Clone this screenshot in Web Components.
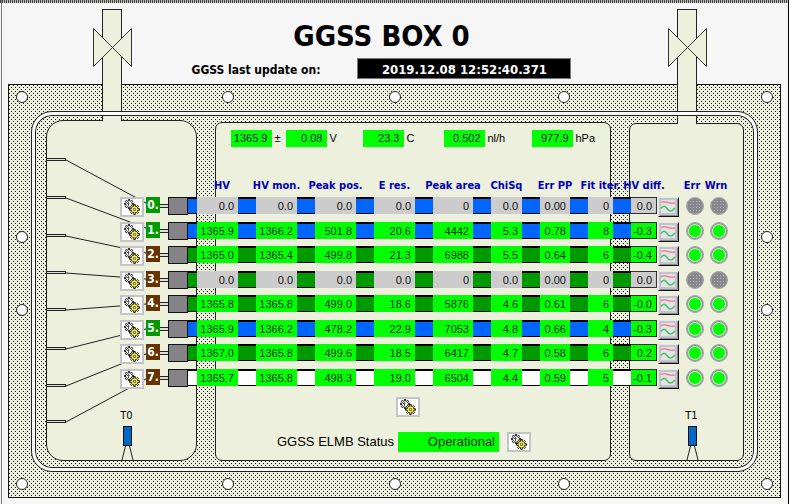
<!DOCTYPE html>
<html lang="en">
<head>
<meta charset="utf-8">
<title>GGSS BOX 0</title>
<style>
html, body { margin: 0; background: #f6f6f6; }
body { color: #000; font: 11px/17px "Liberation Sans", Arial, sans-serif; }
</style>
</head>
<body>
<ggss-panel></ggss-panel>
<script>
const define = (name, html, setup) => {
  const tpl = document.createElement('template');
  tpl.innerHTML = html;
  customElements.define(name, class extends HTMLElement {
    constructor() {
      super();
      this.attachShadow({ mode: 'open' }).append(tpl.content.cloneNode(true));
    }
    connectedCallback() { if (setup) setup(this, this.shadowRoot); }
  });
};

const cogPath = (cx, cy, outer, inner, teeth) => {
  const pts = [];
  for (let i = 0; i < teeth; i++) {
    [[-.30, inner], [-.20, outer], [.20, outer], [.30, inner]].forEach(([o, r]) => {
      const a = (i + o) * 2 * Math.PI / teeth;
      pts.push((cx + r * Math.sin(a)).toFixed(2) + ' ' + (cy - r * Math.cos(a)).toFixed(2));
    });
  }
  return 'M' + pts.join('L') + 'Z';
};

define('gear-button', `
<style>
:host { display: block; width: 24px; height: 20px; }
button { display: block; box-sizing: border-box; width: 24px; height: 20px; padding: 0 0 0 2px; border: 2px solid #c3c3c8; background: #fff; }
svg { display: block; }
</style>
<button type="button" aria-label="Settings">
<svg width="16" height="16" viewBox="0 0 16 16">
  <path class="back" fill="#fff" stroke="#111"/>
  <path d="M3 4.500h2.500M4.500 3v4" fill="none" stroke="#555"/>
  <path class="front" fill="#fff24a" stroke="#111"/>
  <circle cx="10.500" cy="10.500" r="1.200" fill="#fff" stroke="#222" stroke-width=".8"/>
</svg></button>`,
(el, root) => {
  root.querySelector('.back').setAttribute('d', cogPath(5, 5, 4.6, 3, 8));
  root.querySelector('.front').setAttribute('d', cogPath(10.5, 10.5, 5, 3.4, 8));
});

define('plot-button', `
<style>
:host { display: block; width: 21px; height: 20px; }
button { display: block; box-sizing: border-box; width: 21px; height: 20px; padding: 0; border: 1px solid; border-color: #e8e8ec #111 #111 #e8e8ec; background: #c4c3cc; }
svg { display: block; }
</style>
<button type="button" aria-label="Show trend">
<svg width="19" height="18" viewBox="0 0 19 18">
  <path d="M1 17.500h17.500V1" fill="none" stroke="#8a8a92"/>
  <rect x="2" y="2" width="14" height="13" fill="#e2e2e8"/>
  <path d="M2 4.500c2-1 4-1 6-.3s4 1.300 8 .8" fill="none" stroke="#e88a90" stroke-width="1.500"/>
  <path d="M2 10.500c2-3 4-3 6 0s4 4 8-.5" fill="none" stroke="#3fc455" stroke-width="1.400"/>
</svg></button>`);

define('status-led', `
<style>
:host { display: block; width: 18px; height: 18px; box-sizing: border-box; border-radius: 50%; border: 1px solid #a8a8ac; background: #00ff00;
  box-shadow: inset 0 0 0 1px #8e8e94, inset 0 0 0 2px #cfe6cf; }
:host([off]) { background: conic-gradient(from 90deg at 1px 1px, transparent 50%, #b4b4b8 0 75%, transparent 0) 0 0/3px 3px #88888c; box-shadow: inset 0 0 0 1px #8e8e94; }
</style>`);

define('gas-pipe', `
<style>
:host { display: block; width: 40px; }
svg { display: block; width: 40px; height: 100%; }
</style>
<svg>
  <rect x="10.500" y="1.500" width="19" height="160" fill="#edf0dc" stroke="#222"/>
  <path d="M1.500 20.500L39.500 58.500V20.500L1.500 58.500Z" fill="#edf0dc" stroke="#333"/>
</svg>`);

define('temp-sensor', `
<style>
:host { display: flex; flex-direction: column; align-items: center; font: 11px/14px "DejaVu Sans Condensed", "DejaVu Sans", sans-serif; }
svg { display: block; margin-top: 3px; }
</style>
<slot></slot>
<svg width="14" height="34" viewBox="0 0 14 34">
  <path d="M5.500 20L2 34M9.500 20L13 34" fill="none" stroke="#222"/>
  <rect x="3.500" y=".5" width="8" height="19" fill="#0068c8" stroke="#111"/>
</svg>`);

define('gas-chamber', `
<style>
:host { display: flex; flex-direction: column; position: relative; box-sizing: border-box; min-width: 0; border: 1px solid #222; border-radius: var(--corner, 7px); background: #edf0dc; }
</style>
<slot></slot>`);

define('wire-leads', `
<style>:host { display: block; width: 110px; height: 320px; } svg { display: block; }</style>
<svg width="110" height="320" viewBox="46 120 110 320"><g fill="none" stroke="#222"></g></svg>`,
(el, root) => {
  const ends = [[160, 203], [198, 228], [236, 253], [273, 279], [310, 304], [349, 329], [386, 354], [422, 379]];
  root.querySelector('g').innerHTML = ends.map(([a, b]) =>
    `<path d="M66 ${a}L146 ${b}"/><rect x="46.500" y="${a - 1.5}" width="19" height="2" fill="#ddd"/>`).join('');
});

define('value-reading', `
<style>
:host { display: flex; white-space: nowrap; }
output { box-sizing: border-box; flex: none; width: 41px; padding-right: 4px; background: #00ff00; color: #123; text-align: right; }
.unit { padding-left: 3px; }
</style>
<output></output><span class="unit"></span>`,
(el, root) => {
  root.querySelector('output').textContent = el.getAttribute('value');
  root.querySelector('.unit').textContent = el.getAttribute('unit');
});

define('straw-table', `
<style>
:host { display: block; }
table { width: 100%; border-collapse: collapse; table-layout: fixed; }
td, th { padding: 0; vertical-align: top; }
thead tr { height: 20px; }
th { font: bold 11px/18px "DejaVu Sans Condensed", "DejaVu Sans", sans-serif; color: #0000b4; white-space: nowrap; }
th div { display: flex; justify-content: center; padding-left: 18px; }
th.lamp div { padding: 0 6px 0 0; }
tbody tr { height: 25px; }
tbody tr:nth-child(even) { height: 24px; }
tbody th { text-align: left; }
.badge { display: block; width: 14px; height: 16px; background: var(--badge); color: #fff; font: bold 12px/16px "DejaVu Sans Condensed", "DejaVu Sans", sans-serif; text-align: center; }
.plug { display: flex; align-items: center; height: 18px; }
.plug::before { content: ""; width: 8px; height: 2px; border: solid #222; border-width: 1px 0; background: #ddd; }
.plug::after { content: ""; flex: 1; height: 16px; border: 1px solid #111; background: #858387; }
.tube { display: flex; box-sizing: border-box; height: 17px; padding-left: 18px; background: linear-gradient(#000 2px, var(--tube) 2px 16px, #000 16px); }
td.first .tube { padding-left: 9px; }
.val { flex: 1; box-sizing: border-box; padding-right: 4px; background: var(--val); color: var(--ink); text-align: right; line-height: 18px; }
td.last .val { border: solid #333; border-width: 1px 1px 1px 0; line-height: 16px; }
plot-button { margin-left: 1px; }
status-led { margin: 0 auto; }
</style>
<table>
  <colgroup></colgroup>
  <thead><tr></tr></thead>
  <tbody></tbody>
</table>`,
(el, root) => {
  const widths = [26, 14, 28, 50, 59, 59, 59, 58, 49, 48, 43, 44, 26, 24, 24];
  const names = ['HV', 'HV mon.', 'Peak pos.', 'E res.', 'Peak area', 'ChiSq', 'Err PP', 'Fit iter.', 'HV diff.'];
  const blue = '#0066ff', green = '#009900', brown = '#663300';
  const rows = [
    [green, blue, 0, '0.0 0.0 0.0 0.0 0 0.0 0.00 0 0.0'],
    [green, blue, 1, '1365.9 1366.2 501.8 20.6 4442 5.3 0.78 8 -0.3'],
    [brown, green, 1, '1365.0 1365.4 499.8 21.3 6988 5.5 0.64 6 -0.4'],
    [brown, green, 0, '0.0 0.0 0.0 0.0 0 0.0 0.00 0 0.0'],
    [brown, green, 1, '1365.8 1365.8 499.0 18.6 5876 4.6 0.61 6 -0.0'],
    [green, blue, 1, '1365.9 1366.2 478.2 22.9 7053 4.8 0.66 4 -0.3'],
    [brown, green, 1, '1367.0 1365.8 499.6 18.5 6417 4.7 0.58 6 0.2'],
    [brown, '#ffffff', 1, '1365.7 1365.8 498.3 19.0 6504 4.4 0.59 5 -0.1']
  ];
  root.querySelector('colgroup').innerHTML = widths.map(w => `<col style="width:${w}px">`).join('');
  root.querySelector('thead tr').innerHTML = '<td></td><td></td><td></td>' +
    names.map(n => `<th scope="col"><div>${n}</div></th>`).join('') +
    '<td></td><th scope="col" class="lamp"><div>Err</div></th><th scope="col" class="lamp"><div>Wrn</div></th>';
  root.querySelector('tbody').innerHTML = rows.map(([badge, tube, on, vals], i) => {
    const led = on ? '<status-led></status-led>' : '<status-led off></status-led>';
    const style = `--badge:${badge};--tube:${tube};--val:${on ? '#00ff00' : '#cccccc'};--ink:${on ? '#143214' : '#111'}`;
    return `<tr style="${style}"><td><gear-button></gear-button></td>` +
      `<th scope="row"><span class="badge">${i}.</span></th><td><div class="plug"></div></td>` +
      vals.split(' ').map((v, k) => `<td class="${k === 0 ? 'first' : k === 8 ? 'last' : ''}"><div class="tube"><span class="val">${v}</span></div></td>`).join('') +
      `<td><plot-button></plot-button></td><td>${led}</td><td>${led}</td></tr>`;
  }).join('');
});

define('detector-plate', `
<style>
:host {
  display: grid; position: relative; margin: 0 8px; border: 1px solid #111;
  background:
    conic-gradient(from 90deg at 1px 1px, transparent 50%, #111 0 75%, transparent 0) 0 0/4px 4px,
    conic-gradient(from 90deg at 1px 1px, transparent 50%, #111 0 75%, transparent 0) 2px 2px/4px 4px,
    #edf0dc;
}
.chambers, .gasket, .straws { grid-area: 1 / 1; }
.chambers { display: grid; grid-template-columns: minmax(0, 151fr) minmax(0, 396fr) minmax(0, 115fr); gap: 18px; margin: 35px 36px 36px 37px; }
.gasket { margin: 27px 23px 26px; border: 3px solid #fff; border-radius: 20px; outline: 1px solid #222; box-shadow: inset 0 0 0 1px #222; pointer-events: none; z-index: 1; }
.straws { z-index: 2; align-self: start; margin: 92px 49px 0 111px; }
.side { --corner: 17px; }
.middle { margin-top: 2px; }
.right { margin-top: 3px; }
gas-pipe { position: absolute; top: -113px; height: 113px; left: 45px; }
.right gas-pipe { left: 37px; top: -116px; height: 116px; }
wire-leads { position: absolute; left: -1px; top: -1px; }
temp-sensor { margin: auto 0 0 10px; }
.readings { display: grid; grid-template-columns: 55px 77px 81px 88px 62px; justify-content: center; margin: 7px 2px 0 0; }
.controls { display: flex; flex-direction: column; align-items: center; gap: 15px; margin-top: auto; padding: 0 18px 8px 0; }
.controls > gear-button { margin-left: 8px; }
.elmb { display: flex; align-items: center; font-size: 13px; line-height: 20px; white-space: nowrap; }
.elmb output { box-sizing: border-box; width: 101px; margin: 0 8px 0 4px; padding-right: 4px; background: #00ff00; color: #143214; text-align: right; }
.bolt { position: absolute; box-sizing: border-box; width: 12px; height: 12px; margin: -6px 0 0 -6px; border: 1px solid #222; border-radius: 50%; background: #fff; }
</style>
<div class="chambers">
  <gas-chamber class="side"><wire-leads></wire-leads><gas-pipe></gas-pipe><temp-sensor>T0</temp-sensor></gas-chamber>
  <gas-chamber class="middle">
    <div class="readings">
      <value-reading value="1365.9" unit="±"></value-reading>
      <value-reading value="0.08" unit="V"></value-reading>
      <value-reading value="23.3" unit="C"></value-reading>
      <value-reading value="0.502" unit="nl/h"></value-reading>
      <value-reading value="977.9" unit="hPa"></value-reading>
    </div>
    <div class="controls">
      <gear-button></gear-button>
      <div class="elmb"><span>GGSS ELMB Status</span><output>Operational</output><gear-button></gear-button></div>
    </div>
  </gas-chamber>
  <gas-chamber class="right"><gas-pipe></gas-pipe><temp-sensor>T1</temp-sensor></gas-chamber>
</div>
<div class="gasket"></div>
<straw-table class="straws"></straw-table>`,
(el, root) => {
  const spots = [];
  for (const y of ['12px', 'calc(100% - 13px)']) for (const x of ['13px', '28.4%', '50%', '72%', 'calc(100% - 13px)']) spots.push([x, y]);
  for (const y of ['152px', '225px']) for (const x of ['13px', 'calc(100% - 13px)']) spots.push([x, y]);
  for (const [x, y] of spots) {
    const b = document.createElement('i');
    b.className = 'bolt';
    b.style.left = x;
    b.style.top = y;
    root.append(b);
  }
});

define('ggss-panel', `
<style>
:host {
  display: flex; flex-direction: column; box-sizing: border-box; min-height: 100vh; padding-bottom: 6px;
  background: linear-gradient(#77777c, #77777c) 1px 0/1px 100% no-repeat, linear-gradient(#000, #000) 100% 0/1px 100% no-repeat,
    repeating-linear-gradient(90deg, #444 0 1px, #bbb 1px 2px) 0 0/100% 3px no-repeat, #f6f6f6;
}
header { padding: 20px 26px 5px 0; font-family: "DejaVu Sans Condensed", "DejaVu Sans", sans-serif; font-weight: bold; }
h1 { margin: 0 0 6px; font-size: 29px; line-height: 32px; text-align: center; }
.update { display: flex; justify-content: center; align-items: center; gap: 37px; height: 21px; font-size: 13px; white-space: nowrap; }
time { box-sizing: border-box; width: 214px; padding-top: 2px; border: 1px solid #777; background: #000; color: #fff; text-align: center; line-height: 17px; }
.label { font-size: 12px; padding-top: 3px; }
detector-plate { flex: 1; }
</style>
<header>
  <h1>GGSS BOX 0</h1>
  <div class="update"><span class="label">GGSS last update on:</span><time datetime="2019-12-08T12:52:40.371">2019.12.08 12:52:40.371</time></div>
</header>
<detector-plate></detector-plate>`);
</script>
</body>
</html>
